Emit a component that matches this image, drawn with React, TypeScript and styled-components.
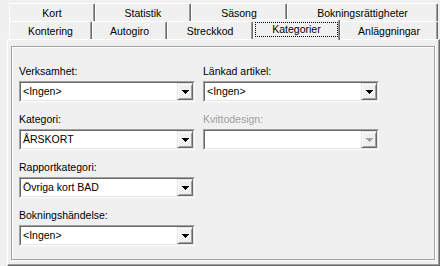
import React from "react";
import styled, { createGlobalStyle } from "styled-components";

const GlobalStyle = createGlobalStyle`
  html, body { margin: 0; padding: 0; background: #f0f0f0; }
  body {
    font-family: "Liberation Sans", Arial, sans-serif;
    font-size: 10.5px;
    color: #000;
  }
`;

const Window = styled.div`
  width: 440px;
  height: 266px;
  box-sizing: border-box;
  padding: 3px 0 0 7px;
  display: flex;
  flex-direction: column;
  background: #f0f0f0;
  overflow: hidden;
`;

const TabRows = styled.div`
  display: flex;
  flex-direction: column;
  padding-left: 2px;
`;

const TabRow = styled.div`
  display: flex;
  height: 18px;
  align-items: flex-start;
`;

const Tab = styled.div<{ $w: number; $active?: boolean }>`
  box-sizing: border-box;
  flex: none;
  width: ${(p) => p.$w}px;
  height: ${(p) => (p.$active ? 21 : 18)}px;
  margin-top: ${(p) => (p.$active ? -2 : 0)}px;
  position: ${(p) => (p.$active ? "relative" : "static")};
  z-index: ${(p) => (p.$active ? 2 : "auto")};
  border-top: 1px solid #fff;
  border-left: 1px solid #fff;
  border-right: 1px solid #696969;
  box-shadow: inset -1px 0 0 #a0a0a0;
  border-radius: 2px 2px 0 0;
  background: #f0f0f0;
  display: flex;
  align-items: flex-start;
`;

const TabLabel = styled.span<{ $focus?: boolean }>`
  flex: 1;
  margin: 2px 1px 0 1px;
  border: 1px dotted ${(p) => (p.$focus ? "#000" : "transparent")};
  line-height: 13px;
  text-align: center;
  white-space: nowrap;
`;

const Panel = styled.div`
  flex: 1;
  box-sizing: border-box;
  border-top: 1px solid #fff;
  border-left: 1px solid #fff;
  border-right: 1px solid #696969;
  border-bottom: 1px solid #696969;
  box-shadow: inset -1px -1px 0 #a0a0a0;
  display: flex;
  padding: 6px 4px 5px 3px;
`;

const Group = styled.div`
  flex: 1;
  box-sizing: border-box;
  border: 1px solid #a0a0a0;
  box-shadow: 1px 1px 0 #fff, inset 1px 1px 0 #fff;
  padding: 18px 0 0 7px;
  display: grid;
  grid-template-columns: 176px 176px;
  column-gap: 8px;
  row-gap: 11px;
  align-content: start;
`;

const Field = styled.div`
  display: flex;
  flex-direction: column;
  gap: 3px;
`;

const FieldLabel = styled.span<{ $disabled?: boolean }>`
  height: 13px;
  line-height: 13px;
  white-space: nowrap;
  color: ${(p) => (p.$disabled ? "#a0a0a0" : "#000")};
`;

const Combo = styled.div`
  box-sizing: border-box;
  height: 21px;
  border: 1px solid;
  border-color: #a0a0a0 #fff #fff #a0a0a0;
  display: flex;
`;

const ComboInner = styled.div`
  flex: 1;
  display: flex;
  border: 1px solid;
  border-color: #696969 #e3e3e3 #e3e3e3 #696969;
  background: #fff;
`;

const ComboValue = styled.span`
  flex: 1;
  padding-left: 2px;
  line-height: 17px;
  white-space: nowrap;
  overflow: hidden;
`;

const DropButton = styled.div`
  box-sizing: border-box;
  width: 16px;
  border: 1px solid;
  border-color: #e3e3e3 #696969 #696969 #e3e3e3;
  box-shadow: inset 1px 1px 0 #fff, inset -1px -1px 0 #a0a0a0;
  background: #f0f0f0;
  display: flex;
  align-items: center;
  justify-content: center;
`;

const Arrow = ({ color }: { color: string }) => (
  <svg width="7" height="4" viewBox="0 0 7 4" shapeRendering="crispEdges">
    <path
      d="M0 0h7v1h-1v1h-1v1h-1v1h-1v-1h-1v-1h-1v-1h-1z"
      fill={color}
    />
  </svg>
);

type FieldDef = { label: string; value: string; disabled?: boolean } | null;

const rowsTop = [
  { t: "Kort", w: 86 },
  { t: "Statistik", w: 96 },
  { t: "Säsong", w: 96 },
  { t: "Bokningsrättigheter", w: 151 },
];

const rowsFront = [
  { t: "Kontering", w: 83 },
  { t: "Autogiro", w: 75 },
  { t: "Streckkod", w: 86 },
  { t: "Kategorier", w: 87, active: true },
  { t: "Anläggningar", w: 98 },
];

const fields: FieldDef[] = [
  { label: "Verksamhet:", value: "<Ingen>" },
  { label: "Länkad artikel:", value: "<Ingen>" },
  { label: "Kategori:", value: "ÅRSKORT" },
  { label: "Kvittodesign:", value: "", disabled: true },
  { label: "Rapportkategori:", value: "Övriga kort BAD" },
  null,
  { label: "Bokningshändelse:", value: "<Ingen>" },
  null,
];

export default function App() {
  return (
    <>
      <GlobalStyle />
      <Window>
        <TabRows>
          <TabRow>
            {rowsTop.map((r) => (
              <Tab key={r.t} $w={r.w}>
                <TabLabel>{r.t}</TabLabel>
              </Tab>
            ))}
          </TabRow>
          <TabRow>
            {rowsFront.map((r) => (
              <Tab key={r.t} $w={r.w} $active={r.active}>
                <TabLabel $focus={r.active}>{r.t}</TabLabel>
              </Tab>
            ))}
          </TabRow>
        </TabRows>
        <Panel>
          <Group>
            {fields.map((f, i) =>
              f ? (
                <Field key={i}>
                  <FieldLabel $disabled={f.disabled}>{f.label}</FieldLabel>
                  <Combo>
                    <ComboInner>
                      <ComboValue>{f.value}</ComboValue>
                      <DropButton>
                        <Arrow color={f.disabled ? "#a0a0a0" : "#000"} />
                      </DropButton>
                    </ComboInner>
                  </Combo>
                </Field>
              ) : (
                <div key={i} />
              )
            )}
          </Group>
        </Panel>
      </Window>
    </>
  );
}
